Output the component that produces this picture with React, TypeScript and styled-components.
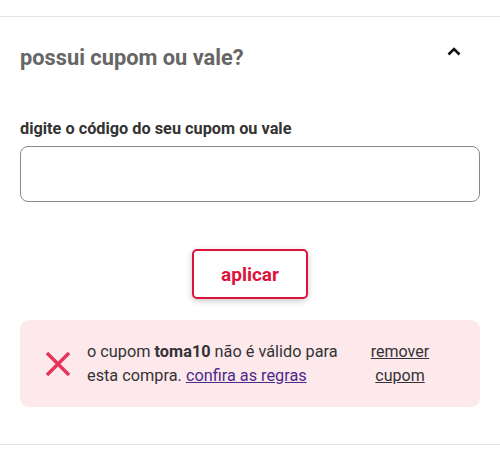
import styled, { createGlobalStyle } from "styled-components"

const GlobalStyle = createGlobalStyle`
   body {
      margin: 0;
      background: #fff;
      font-family: Roboto, "Liberation Sans", Arial, sans-serif;
   }
`

const Section = styled.section`
   margin-top: 16px;
   border-top: 1px solid #e4e4e4;
   border-bottom: 1px solid #e4e4e4;
   padding: 28px 20px 37px;
`
const Header = styled.div`
   display: flex;
   align-items: flex-start;
   justify-content: space-between;
`
const Title = styled.h2`
   margin: 0;
   font-size: 21.8px;
   line-height: 26px;
   font-weight: 700;
   color: #666;
`
const Toggle = styled.button`
   border: none;
   background: none;
   padding: 0;
   margin: 2px 19px 0 0;
   width: 14px;
   height: 9px;
   display: flex;
   align-items: center;
   justify-content: center;
   cursor: pointer;
`
const Label = styled.label`
   display: block;
   margin-top: 48px;
   margin-bottom: 7px;
   font-size: 16.3px;
   line-height: 20px;
   font-weight: 700;
   color: #333;
`
const Input = styled.input`
   box-sizing: border-box;
   width: 100%;
   height: 56px;
   border: 1px solid #8a8a8a;
   border-radius: 8px;
   padding: 0 16px;
   font-size: 16px;
   font-family: inherit;
   display: block;
`
const ButtonRow = styled.div`
   display: flex;
   justify-content: center;
   margin-top: 47px;
`
const ApplyButton = styled.button`
   box-sizing: border-box;
   width: 116px;
   height: 50px;
   border: 2px solid #dc143c;
   border-radius: 5px;
   background: #fff;
   color: #dc143c;
   font-family: inherit;
   font-size: 19px;
   font-weight: 700;
   box-shadow: 0 2px 6px rgba(0, 0, 0, 0.22);
   cursor: pointer;
`
const Alert = styled.div`
   margin-top: 21px;
   height: 87px;
   box-sizing: border-box;
   background: #fde8ec;
   border-radius: 9px;
   display: flex;
   align-items: center;
   padding: 0 35px 0 25px;
`
const AlertIcon = styled.div`
   width: 26px;
   height: 26px;
   flex-shrink: 0;
   margin-right: 16px;
`
const Message = styled.p`
   margin: 0;
   width: 262px;
   font-size: 16.3px;
   line-height: 24px;
   color: #333;
   strong {
      font-weight: 700;
   }
`
const RulesLink = styled.a`
   color: #4b2a8a;
   text-decoration: underline;
`
const RemoveLink = styled.a`
   margin-left: auto;
   width: 90px;
   text-align: center;
   font-size: 16px;
   line-height: 24px;
   color: #333;
   text-decoration: underline;
   cursor: pointer;
`

export default function App() {
   return (
      <>
         <GlobalStyle />
         <Section>
            <Header>
               <Title>possui cupom ou vale?</Title>
               <Toggle aria-label="recolher">
                  <svg width="14" height="9" viewBox="0 0 14 9">
                     <polyline points="1.5,7.5 7,2 12.5,7.5" fill="none" stroke="#111" strokeWidth="2.6" />
                  </svg>
               </Toggle>
            </Header>
            <Label htmlFor="cupom">digite o código do seu cupom ou vale</Label>
            <Input id="cupom" />
            <ButtonRow>
               <ApplyButton>aplicar</ApplyButton>
            </ButtonRow>
            <Alert>
               <AlertIcon>
                  <svg width="26" height="26" viewBox="0 0 26 26">
                     <path d="M2 2 L24 24 M24 2 L2 24" stroke="#e8345a" strokeWidth="3.4" />
                  </svg>
               </AlertIcon>
               <Message>
                  o cupom <strong>toma10</strong> não é válido para
                  <br />
                  esta compra. <RulesLink href="#">confira as regras</RulesLink>
               </Message>
               <RemoveLink>remover cupom</RemoveLink>
            </Alert>
         </Section>
      </>
   )
}
